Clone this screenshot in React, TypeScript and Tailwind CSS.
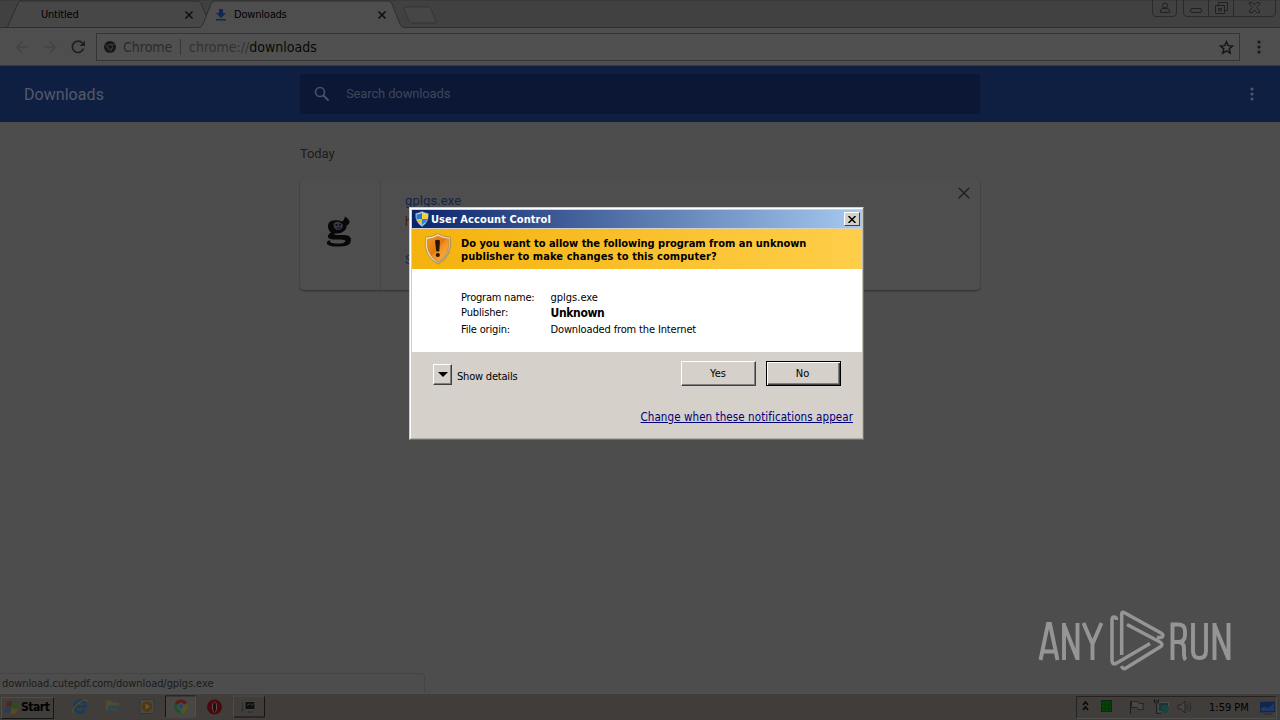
import React from "react";

const TAHOMA = "font-['DejaVu_Sans_Condensed','DejaVu_Sans',sans-serif] [font-stretch:condensed]";

function Dots({ className }: { className: string }) {
  return (
    <svg width="6" height="16" viewBox="0 0 6 16" className={className} fill="currentColor">
      <circle cx="3" cy="3" r="1.6" />
      <circle cx="3" cy="8" r="1.6" />
      <circle cx="3" cy="13" r="1.6" />
    </svg>
  );
}

function TabStrip() {
  return (
    <div className="relative h-7 bg-[#414141]">
      <svg width="1280" height="28" viewBox="0 0 1280 28" className="block" fill="none">
        <path d="M0 .5H1280" stroke="#3a3a3a" />
        <path d="M7 28L18 3Q19 1 21 1H197Q200 1 201 3L208 20L204 28Z" fill="#474747" stroke="#2d2d2d" />
        <path d="M404 9Q403 7 406 7H428Q430 7 431 9L436 21Q437 23 434 23H413Q410 23 409 21Z" fill="#464646" stroke="#353535" />
        <path d="M0 27.5H200M406 27.5H1280" stroke="#2e2e2e" />
        <path d="M198 28.5Q202 27 203 24L211 4Q212 1 215 1H388Q391 1 392 4L400 24Q402 28 406 28.5Z" fill="#4e4e4e" />
        <path d="M198 28Q202 27 203 24L211 4Q212 1 215 1H388Q391 1 392 4L400 24Q402 28 406 28" stroke="#2e2e2e" />
        <path d="M185.500 11.500L192.500 18.500M192.500 11.500L185.500 18.500M378.500 11.500L385.500 18.500M385.500 11.500L378.500 18.500" stroke="#111" strokeWidth="1.700" />
        <path d="M219 9H223V13H226L221 18L216 13H219ZM216 19H226V20.500H216Z" fill="#12265c" />
        <path d="M1152.500 0V13Q1152.500 16.500 1156 16.500H1173Q1176.500 16.500 1176.500 13V0M1183.500 0V13Q1183.500 16.500 1187 16.500H1272Q1275.500 16.500 1275.500 13V0M1208.500 0V16M1233.500 0V16" stroke="#2a2a2a" />
        <g stroke="#202020">
          <circle cx="1165" cy="5.500" r="2.500" />
          <path d="M1160.500 12.500V10L1162.500 8.500H1167.500L1169.500 10V12.500Z" />
          <rect x="1190.500" y="8.500" width="11" height="4" rx="1.500" />
          <path d="M1218.500 5V2.500H1227.500V10.500H1225M1215.500 5.500H1224.500V13.500H1215.500ZM1218.500 8.500H1221.500V10.500H1218.500Z" />
          <path d="M1249.500 2.500H1252.500L1254.500 5L1256.500 2.500H1259.500V4.500L1256.500 7.500L1259.500 10.500V12.500H1256.500L1254.500 10L1252.500 12.500H1249.500V10.500L1252.500 7.500L1249.500 4.500Z" strokeWidth=".9" />
        </g>
      </svg>
      <span className={`${TAHOMA} absolute left-[41px] top-2 text-[11px] leading-[14px] tracking-[-0.2px] text-black`}>Untitled</span>
      <span className={`${TAHOMA} absolute left-[234px] top-2 text-[11px] leading-[14px] tracking-[-0.2px] text-black`}>Downloads</span>
    </div>
  );
}

function Toolbar() {
  return (
    <div className="flex h-[38px] items-center border-b border-[#3b3b3b] bg-[#4e4e4e] pl-[14px]">
      <svg width="76" height="20" viewBox="0 0 76 20" fill="none" className="mr-[6px] shrink-0">
        <path d="M14 10H3M8 4.500L2.500 10L8 15.500" stroke="#444" strokeWidth="1.300" />
        <path d="M30 10H41M36 4.500L41.500 10L36 15.500" stroke="#444" strokeWidth="1.300" />
        <path d="M68.500 6.200A5.700 5.700 0 1 0 69.500 11.500" stroke="#202020" strokeWidth="1.700" />
        <path d="M71 3.500V9H65.500Z" fill="#202020" />
      </svg>
      <div className="flex h-[28px] w-[1144px] items-center border border-[#343434] bg-[#505050] pl-[7px] font-['DejaVu_Sans_Condensed','DejaVu_Sans',sans-serif] text-[14px]">
        <svg width="12" height="12" viewBox="0 0 12 12" fill="none">
          <circle cx="6" cy="6" r="6" fill="#171717" />
          <circle cx="6" cy="6" r="2.500" stroke="#4e4e4e" strokeWidth=".7" />
          <path d="M6 3.500H11M3.800 7.200L1.300 3M8.200 7.200L5.800 11.500" stroke="#4e4e4e" strokeWidth=".6" />
        </svg>
        <span className="ml-[7px] mt-[2px] w-[50px] text-[#2b2b2b]">Chrome</span>
        <span className="ml-[7px] h-4 w-px bg-[#353535]" />
        <span className="ml-[8px] mt-[2px] flex-1 text-[#303030]">chrome://<span className="text-[#080808]">downloads</span></span>
        <svg width="15" height="15" viewBox="0 0 16 16" fill="none" className="mr-[5px] mt-px">
          <path d="M8 1.800L9.800 6L14.400 6.400L10.900 9.400L12 14L8 11.500L4 14L5.100 9.400L1.600 6.400L6.200 6Z" stroke="#161616" strokeWidth="1.600" />
        </svg>
      </div>
      <Dots className="ml-[15.500px] mt-px text-[#191919]" />
    </div>
  );
}

function DownloadsHeader() {
  return (
    <div className="flex h-14 items-center bg-[#0f1f42] font-[Roboto,sans-serif]">
      <span className="mt-[2px] w-[300px] pl-6 text-[16px] tracking-[0.05px] text-[#535a6a]">Downloads</span>
      <div className="flex h-10 w-[680px] items-center rounded-sm bg-[#0b1734] pl-[14px]">
        <svg width="16" height="16" viewBox="0 0 16 16" fill="none">
          <circle cx="6" cy="6" r="4.500" stroke="#475066" strokeWidth="1.700" />
          <path d="M9.500 9.500L14.500 14.500" stroke="#475066" strokeWidth="2" />
        </svg>
        <span className="ml-4 text-[13px] tracking-[-0.14px] text-[#3d465b]">Search downloads</span>
      </div>
      <Dots className="ml-[269px] text-[#4e5668]" />
    </div>
  );
}

function DownloadsPage() {
  return (
    <div className="h-[571px] bg-[#4d4d4d] pl-[300px] pt-[23px] font-[Roboto,sans-serif]">
      <div className="text-[13px] leading-[18px] tracking-[-0.1px] text-[#1c1c1c]">Today</div>
      <div className="mt-[16px] flex h-[111px] w-[680px] rounded-sm bg-[#4e4e4e] shadow-[0_1px_2px_#303030]">
        <div className="flex w-[81px] items-center justify-center border-r border-[#454545] pb-[5px] pr-[2px]">
          <svg width="28" height="32" viewBox="0 0 28 32" fill="none">
            <path d="M3 10Q3 4.500 10 4.300Q14 4 17 5.500Q19.500 4 20 .5Q23 2 24.500 5Q25 8 21.500 9.500Q22 12.500 19 15Q16 18 10 17.500Q8 18.500 11 19H19Q26 19 26 24Q26 30 16 30.500Q4 31 2 28Q1 25 5 24Q4 27 10 27.500Q20 28 20.500 25Q20 23.500 16 23.500H8Q2 23 3 19.500Q4 17.500 6 16.500Q3 14 3 10Z" fill="#080808" />
            <path d="M9 7Q13 4.500 16 7Q19 8.500 17 12Q14.500 15 11 13.500Q7.500 11 9 7Z" fill="#353848" />
            <circle cx="11.500" cy="9" r="1" fill="#080808" /><circle cx="14.800" cy="8.700" r=".9" fill="#080808" />
            <path d="M12 12Q14 13 15.500 11" stroke="#080808" />
          </svg>
        </div>
        <div className="flex flex-1 flex-col pl-6 pt-[13px] text-[13px] leading-[18px] text-[#15234a]">
          <span className="tracking-[0.1px]">gplgs.exe</span>
          <span className="mt-[3px] text-[12px] text-[#481616]">h</span>
          <span className="mt-[20px] text-[13px]">S</span>
        </div>
        <svg width="12" height="12" viewBox="0 0 12 12" className="mr-[10px] mt-[8px]">
          <path d="M.7 .7L11.300 11.300M11.300 .7L.7 11.300" stroke="#202020" strokeWidth="1.500" />
        </svg>
      </div>
    </div>
  );
}

function TitleShield() {
  return (
    <svg width="14" height="16" viewBox="0 0 14 16">
      <path d="M7 .5Q10 2 13.300 2.500Q14 11 7 15.500Q0 11 .7 2.500Q4 2 7 .5Z" fill="#c9dce2" stroke="#6d8a90" strokeWidth=".6" />
      <path d="M7 2V8H1.700Q1.300 5 1.700 3.500Q4.500 3.300 7 2Z" fill="#2879d2" />
      <path d="M7 2V8H12.300Q12.700 5 12.300 3.500Q9.500 3.300 7 2Z" fill="#f6cf35" />
      <path d="M7 8V14.200Q2.700 11.500 1.700 8Z" fill="#f0bd25" />
      <path d="M7 8V14.200Q11.300 11.500 12.300 8Z" fill="#2e83da" />
    </svg>
  );
}

function WarningShield() {
  return (
    <svg width="28" height="32" viewBox="0 0 28 32">
      <defs>
        <linearGradient id="rim" x2="1" y2="1"><stop stopColor="#fff3cb" /><stop offset=".5" stopColor="#e0d3b0" /><stop offset="1" stopColor="#8d8574" /></linearGradient>
        <linearGradient id="amber" x2="1" y2="1"><stop stopColor="#f19a28" /><stop offset=".48" stopColor="#e87609" /><stop offset=".5" stopColor="#f08c1c" /><stop offset="1" stopColor="#ffc146" /></linearGradient>
      </defs>
      <path d="M14 .7Q19 4 26.500 4.300Q29 23 14 31.300Q-1 23 1.500 4.300Q9 4 14 .7Z" fill="url(#rim)" stroke="#a58235" strokeWidth=".7" />
      <path d="M14 3Q19 6 24.800 6.300Q26 21.500 14 29Q2 21.500 3.200 6.300Q9 6 14 3Z" fill="url(#amber)" stroke="#c38132" strokeWidth=".6" />
      <path d="M11 7.500Q13.500 6 16 7.500L15.300 18.500H12.300Z" fill="#24160b" />
      <circle cx="13.800" cy="22" r="2.100" fill="#24160b" />
    </svg>
  );
}

function UacDialog() {
  return (
    <div className={`${TAHOMA} absolute left-[409px] top-[207px] flex h-[233px] w-[455px] flex-col border border-b-[#707070] border-l-[#d4d0c8] border-r-[#707070] border-t-[#d4d0c8] bg-[#d5d0ca] text-[11px] text-black`}>
      <div className="flex h-full flex-col border border-b-[#b0aca4] border-l-white border-r-[#c4c0b8] border-t-white">
        <div className="ml-px mt-px flex h-[18px] items-center bg-[linear-gradient(to_right,#0a246a,#a6caf0)] pl-[3px] pr-[2px]">
          <TitleShield />
          <span className="ml-[2px] mt-[2px] flex-1 font-bold tracking-[0.08px] text-white">User Account Control</span>
          <span className="flex h-[14px] w-4 items-center justify-center border border-b-[#404040] border-l-white border-r-[#404040] border-t-white bg-[#d4d0c8]">
            <svg width="8" height="7" viewBox="0 0 8 7"><path d="M.5 0L7.500 7M7.500 0L.5 7" stroke="#000" strokeWidth="1.500" /></svg>
          </span>
        </div>
        <div className="ml-px mt-px flex h-[40px] items-start bg-[linear-gradient(to_right,#f4b20c,#ffce4a)] pl-[12px] pt-[4px]">
          <WarningShield />
          <div className="ml-[9px] mt-[4px] whitespace-nowrap font-bold leading-[13px]">
            <div className="tracking-[-0.02px]">Do you want to allow the following program from an unknown</div>
            <div className="tracking-[0.07px]">publisher to make changes to this computer?</div>
          </div>
        </div>
        <div className="ml-px grid h-[83px] grid-cols-[89px_1fr] grid-rows-[15px_17px_16px] bg-white pl-[49px] pt-[21px] leading-[15px] tracking-[-0.14px]">
          <span className="tracking-[-0.22px]">Program name:</span><span className="ml-[0.5px] tracking-[0]">gplgs.exe</span>
          <span>Publisher:</span><span className="ml-[0.5px] text-[12px] font-bold leading-[17px] tracking-[-0.35px]">Unknown</span>
          <span className="tracking-[-0.18px]">File origin:</span><span className="ml-[0.5px]">Downloaded from the Internet</span>
        </div>
        <div className="flex pl-[22px] pt-[9px]">
          <span className="mt-[3px] flex h-[21px] w-[19px] items-center justify-center border border-b-[#404040] border-l-white border-r-[#404040] border-t-white shadow-[inset_-1px_-1px_#808080]">
            <svg width="10" height="5" viewBox="0 0 10 5"><path d="M0 0H10L5 5Z" /></svg>
          </span>
          <span className="ml-[5px] mt-[8px] w-[224px] leading-[15px] tracking-[-0.2px]">Show details</span>
          <button className="h-[25px] w-[75px] border border-b-[#404040] border-l-white border-r-[#404040] border-t-white pr-px pt-px shadow-[inset_-1px_-1px_#808080]">Yes</button>
          <button className="ml-[10px] h-[25px] w-[75px] border border-black pr-[2px] pt-px shadow-[inset_1px_1px_#fff,inset_-1px_-1px_#404040,inset_-2px_-2px_#808080]">No</button>
        </div>
        <div className="mr-[9px] mt-[24px] whitespace-nowrap text-right text-[11.500px] leading-[15px] tracking-[0.08px] text-[#00007b] underline">Change when these notifications appear</div>
      </div>
    </div>
  );
}

function Taskbar() {
  return (
    <div className="flex h-[27px] items-center border-t border-[#505050] bg-[#403d3b] pt-px">
      <div className="ml-px flex h-[22px] w-[53px] items-center border border-b-[#151515] border-l-[#4e4e4e] border-r-[#151515] border-t-[#4e4e4e] pl-[2px]">
        <svg width="16" height="16" viewBox="0 0 16 16" className="shrink-0">
          <path d="M3 2Q6 0 8 2L7 7Q5 5 2 7Z" fill="#572516" /><path d="M9 2Q12 4 15 2L14 7Q11 9 8 7Z" fill="#2b4c1d" />
          <path d="M2 8Q5 6 7 8L5 13Q3 11 0 13Z" fill="#203e61" /><path d="M8 8Q11 10 14 8L12 13Q9 15 6 13Z" fill="#5a4a17" />
        </svg>
        <span className={`${TAHOMA} mb-px ml-px text-[12px] font-bold tracking-[-0.45px] text-black`}>Start</span>
      </div>
      <svg width="212" height="26" viewBox="0 .5 212 26" fill="none" className="mb-px shrink-0">
        <path d="M30.500 16Q29 19 26 19A5.500 6 0 1 1 31.500 13H21" stroke="#163c60" strokeWidth="2.800" />
        <path d="M19 20Q17 16 24 10T34 8" stroke="#5b4e20" strokeWidth="1.100" />
        <path d="M52 7H57L58 9H65V17H52Z" fill="#514b30" /><path d="M54 12H66V19H63V16H57V19H54Z" fill="#2c454f" />
        <rect x="86" y="6" width="14" height="14" rx="1" fill="#45494c" stroke="#2d3033" strokeWidth=".7" /><circle cx="93" cy="13" r="5.200" fill="#573608" /><path d="M91.500 10L96 13L91.500 16Z" fill="#5a5851" />
        <path d="M111.500 23.500V2.500H141.500" stroke="#151515" /><path d="M112 23.500H141.500V3" stroke="#505050" /><rect x="112" y="3" width="29" height="20" fill="#484746" />
        <circle cx="127" cy="13" r="7" fill="#245027" /><path d="M127 13L121 9.500A7 7 0 0 1 133 9.500Z" fill="#5a1d19" /><path d="M127 13L133 9.500A7 7 0 0 1 127 20Z" fill="#5c501b" /><circle cx="127" cy="13" r="3" fill="#24436d" stroke="#555" />
        <circle cx="160.500" cy="13.500" r="7.500" fill="#4c080b" /><ellipse cx="160.500" cy="13.500" rx="2.600" ry="5.500" fill="#555" /><ellipse cx="160.500" cy="13.500" rx="1.500" ry="5" fill="#2b0808" />
        <path d="M179.500 23.500V2.500H210.500" stroke="#4e4c4a" /><path d="M180 23.500H210.500V3" stroke="#151515" /><rect x="191" y="8" width="10" height="8" fill="#101010" stroke="#454341" /><path d="M193 12L196 10L198 12L201 9" stroke="#294729" /><path d="M188.500 9V18M187 16.500H190M194 18.500H199" stroke="#292929" strokeWidth=".8" />
      </svg>
      <div className="ml-auto mr-[3px] flex h-[23px] w-[201px] items-center border border-b-[#4e4e4e] border-l-[#252322] border-r-[#4e4e4e] border-t-[#252322]">
        <svg width="130" height="20" viewBox="0 0 130 20" fill="none" className="mb-px shrink-0">
          <path d="M6 8L8.500 5L11 8M6 13L8.500 10L11 13" stroke="#070707" strokeWidth="1.500" />
          <rect x="24.500" y="3.500" width="10" height="11" fill="#034303" stroke="#142414" /><path d="M24 7.500H35M24 11.500H35M28 4V15M32 4V15" stroke="#073507" strokeWidth=".5" />
          <path d="M53.500 4V17" stroke="#1c1c1c" /><path d="M54.500 4.500H61L62 6.500H67L65.500 9L67 12.500H61L60 10.500H54.500Z" fill="#474747" stroke="#262626" />
          <rect x="81.500" y="5.500" width="10" height="9" fill="#19353a" stroke="#4c4c4c" /><path d="M77.500 2V6H81.500V2M79.500 7V16.500H84M76 4H82" stroke="#202020" /><circle cx="88" cy="12" r="4" fill="#1b4440" />
          <path d="M101 8H104L108 4V16L104 12H101Z" fill="#454545" stroke="#242424" /><path d="M110 7Q112 10 110 13M112 5Q115.500 10 112 15" stroke="#272727" />
        </svg>
        <span className={`${TAHOMA} ml-[2px] mt-px w-[43px] shrink-0 whitespace-nowrap text-[11px] text-black`}>1:59 PM</span>
        <svg width="16" height="16" viewBox="0 0 16 16" className="ml-[8px] shrink-0"><path d="M0 2L15 1.500V12L0 12.500Z" fill="#10264a" /><path d="M1 8Q5 5 7 8Q9 8 14 3V11H1Z" fill="#1c3969" /><path d="M4 14H12" stroke="#292929" /></svg>
      </div>
    </div>
  );
}

function Watermark() {
  return (
    <div className="absolute left-[1036px] top-[606px]">
      <svg width="200" height="68" viewBox="0 0 200 68" fill="none" stroke="#959595" strokeWidth="3.900">
        <path d="M4.500 54L12 18H14L21.500 54M7 45.500H19M28 54V17M28 19L41 52M41.500 54V17M47.500 17L56.500 38L65.500 17M56.500 37V54" />
        <path d="M136.500 54V18.500H142Q149 18.500 149 25V29Q149 36 142 36H136.500M143 36Q148 37 148 42V48Q148 52 149.500 54M157 17V45Q157 52 163.500 52T170 45V17M178.500 54V17M178.500 19L192 52M192.500 54V17" />
        <path d="M80.500 14Q80.500 11 78 11Q76 11 76 14V54Q76 59 80 57.500L114 37.500M85.700 49V8Q85.700 5 89 7L125 27Q129 29.500 125 31.500L121 31.500M91 18.500L124 36Q128 38.500 124 41L90 62Q87 64 85.500 60" strokeWidth="3.500" />
      </svg>
    </div>
  );
}

export default function App() {
  return (
    <div className="relative flex h-[720px] w-[1280px] flex-col overflow-hidden bg-[#4d4d4d]">
      <TabStrip />
      <Toolbar />
      <DownloadsHeader />
      <DownloadsPage />
      <Taskbar />
      <div className={`${TAHOMA} absolute left-0 top-[673px] h-[20px] w-[425px] rounded-tr border-r border-t border-[#444] bg-[#4d4d4d] pl-[2px] text-[11px] leading-[19px] tracking-[-0.07px] text-[#1b1b1b]`}>download.cutepdf.com/download/gplgs.exe</div>
      <Watermark />
      <UacDialog />
    </div>
  );
}
